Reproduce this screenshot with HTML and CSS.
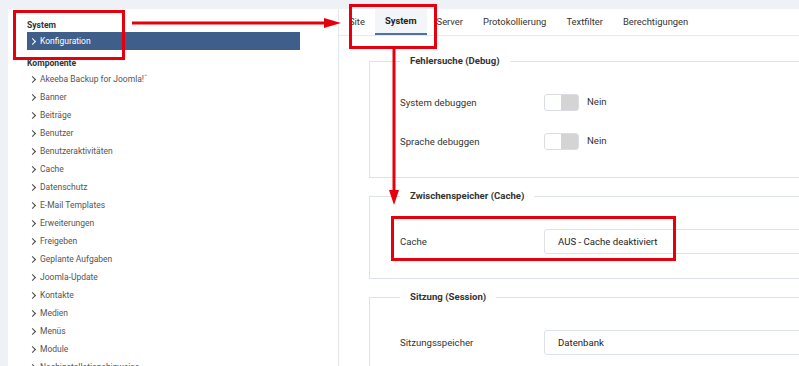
FILE: index.html
```html
<!DOCTYPE html>
<html lang="de">
  <head>
    <meta charset="UTF-8" />
    <meta name="viewport" content="width=device-width, initial-scale=1.0" />
    <title>Globale Konfiguration</title>
    <link rel="stylesheet" href="styles.css">
  </head>
  <body>
    <div class="page">
      <div class="panel">
        <nav class="sidebar">
          <div class="side-heading">System</div>
          <ul class="side-list">
            <li class="active"><span class="chev"></span>Konfiguration</li>
          </ul>
          <div class="side-heading komp">Komponente</div>
          <ul class="side-list">
            <li><span class="chev"></span>Akeeba Backup for Joomla!<span class="tm">™</span></li>
            <li><span class="chev"></span>Banner</li>
            <li><span class="chev"></span>Beiträge</li>
            <li><span class="chev"></span>Benutzer</li>
            <li><span class="chev"></span>Benutzeraktivitäten</li>
            <li><span class="chev"></span>Cache</li>
            <li><span class="chev"></span>Datenschutz</li>
            <li><span class="chev"></span>E-Mail Templates</li>
            <li><span class="chev"></span>Erweiterungen</li>
            <li><span class="chev"></span>Freigeben</li>
            <li><span class="chev"></span>Geplante Aufgaben</li>
            <li><span class="chev"></span>Joomla-Update</li>
            <li><span class="chev"></span>Kontakte</li>
            <li><span class="chev"></span>Medien</li>
            <li><span class="chev"></span>Menüs</li>
            <li><span class="chev"></span>Module</li>
            <li><span class="chev"></span>Nachinstallationshinweise</li>
          </ul>
        </nav>

        <main class="main">
          <div class="tabs">
            <div class="tab">Site</div>
            <div class="tab selected">System</div>
            <div class="tab">Server</div>
            <div class="tab">Protokollierung</div>
            <div class="tab">Textfilter</div>
            <div class="tab">Berechtigungen</div>
          </div>

          <div class="settings">
            <fieldset>
              <legend>Fehlersuche (Debug)</legend>
              <div class="row switch-row">
                <label>System debuggen</label>
                <span class="toggle"></span>
                <span class="toggle-text">Nein</span>
              </div>
              <div class="row switch-row">
                <label>Sprache debuggen</label>
                <span class="toggle"></span>
                <span class="toggle-text">Nein</span>
              </div>
            </fieldset>

            <fieldset>
              <legend>Zwischenspeicher (Cache)</legend>
              <div class="row">
                <label>Cache</label>
                <div class="select-box">AUS - Cache deaktiviert</div>
              </div>
            </fieldset>

            <fieldset>
              <legend>Sitzung (Session)</legend>
              <div class="row">
                <label>Sitzungsspeicher</label>
                <div class="select-box">Datenbank</div>
              </div>
            </fieldset>
          </div>
        </main>
      </div>
    </div>

    <!-- annotations drawn on top of the screenshot -->
    <svg class="marks" width="799" height="366" viewBox="0 0 799 366">
      <g fill="none" stroke="#e6000e" stroke-width="3">
        <rect x="14.5" y="11.5" width="109" height="47" />
        <rect x="350.5" y="5.5" width="85" height="42" />
        <rect x="392.5" y="217.5" width="282" height="42" />
        <line x1="132" y1="23" x2="326" y2="23" />
        <line x1="394" y1="49" x2="394" y2="192" />
      </g>
      <g fill="#e6000e">
        <polygon points="324,18 341,23 324,28" />
        <polygon points="389,190 399,190 394,205" />
      </g>
    </svg>
  </body>
</html>
```

FILE: styles.css
```css
html,
body {
  height: 366px;
  overflow: hidden;
}
body {
  margin: 0;
  background-color: #eef2f7;
  font-family: Roboto, "Liberation Sans", sans-serif;
  color: #333;
  position: relative;
}
.page {
  padding: 9px 0 0 8px;
}
.panel {
  display: flex;
  background-color: white;
  height: 400px;
}

/* sidebar */
.sidebar {
  width: 273px;
  flex-shrink: 0;
  padding: 9px 38px 0 19px;
  border-right: 1px solid #e4e7ec;
}
.side-heading {
  font-size: 8.6px;
  font-weight: bold;
  line-height: 14px;
  color: #333;
}
.side-heading.komp {
  margin-top: 6px;
}
.side-list {
  list-style: none;
  margin: 0;
  padding: 0;
}
.side-list li {
  display: flex;
  align-items: center;
  height: 18px;
  padding-left: 3px;
  font-size: 8.5px;
  color: #555;
}
.side-list li.active {
  background-color: #3f5e8a;
  color: white;
}
.chev {
  width: 4px;
  height: 4px;
  border-right: 1.8px solid #444;
  border-bottom: 1.8px solid #444;
  transform: rotate(-45deg);
  margin: 0 5px 0 0;
}
.active .chev {
  border-color: white;
}
.tm {
  font-size: 5px;
  position: relative;
  top: -3px;
}

/* main */
.main {
  flex: 1;
  overflow: hidden;
}
.tabs {
  display: flex;
  height: 26px;
  border-bottom: 1px solid #e6e9ee;
}
.tab {
  padding: 0 10px;
  font-size: 9.4px;
  line-height: 26px;
  color: #333;
}
.tab.selected {
  background-color: #f3f5f8;
  font-weight: bold;
  color: #222;
  line-height: 24px;
  border-bottom: 2px solid #4d72a6;
}
.settings {
  width: 560px;
  padding: 19px 0 0 30px;
}
fieldset {
  margin: 0 0 12px;
  padding: 27px 0 24px 30px;
  border: 1px solid #dde2e8;
}
legend {
  padding: 0 10px;
  font-size: 9.6px;
  font-weight: bold;
  line-height: 12px;
  color: #333;
}
.row {
  display: flex;
  align-items: center;
  font-size: 9.6px;
}
.row label {
  width: 144px;
  color: #333;
}
.switch-row {
  height: 17px;
}
.switch-row + .switch-row {
  margin-top: 22px;
}
.switch-row:last-child {
  margin-bottom: 3px;
}
.toggle {
  width: 33px;
  height: 15px;
  border: 1px solid #dadee3;
  border-radius: 3px;
  background: linear-gradient(to right, white 50%, #d4d4d4 50%);
}
.toggle-text {
  margin-left: 8px;
  margin-top: -2px;
  color: #333;
}
.select-box {
  width: 300px;
  height: 23px;
  line-height: 23px;
  padding-left: 13px;
  border: 1px solid #dde2e8;
  border-radius: 3px;
  color: #222;
}

.marks {
  position: absolute;
  top: 0;
  left: 0;
  pointer-events: none;
}
```
